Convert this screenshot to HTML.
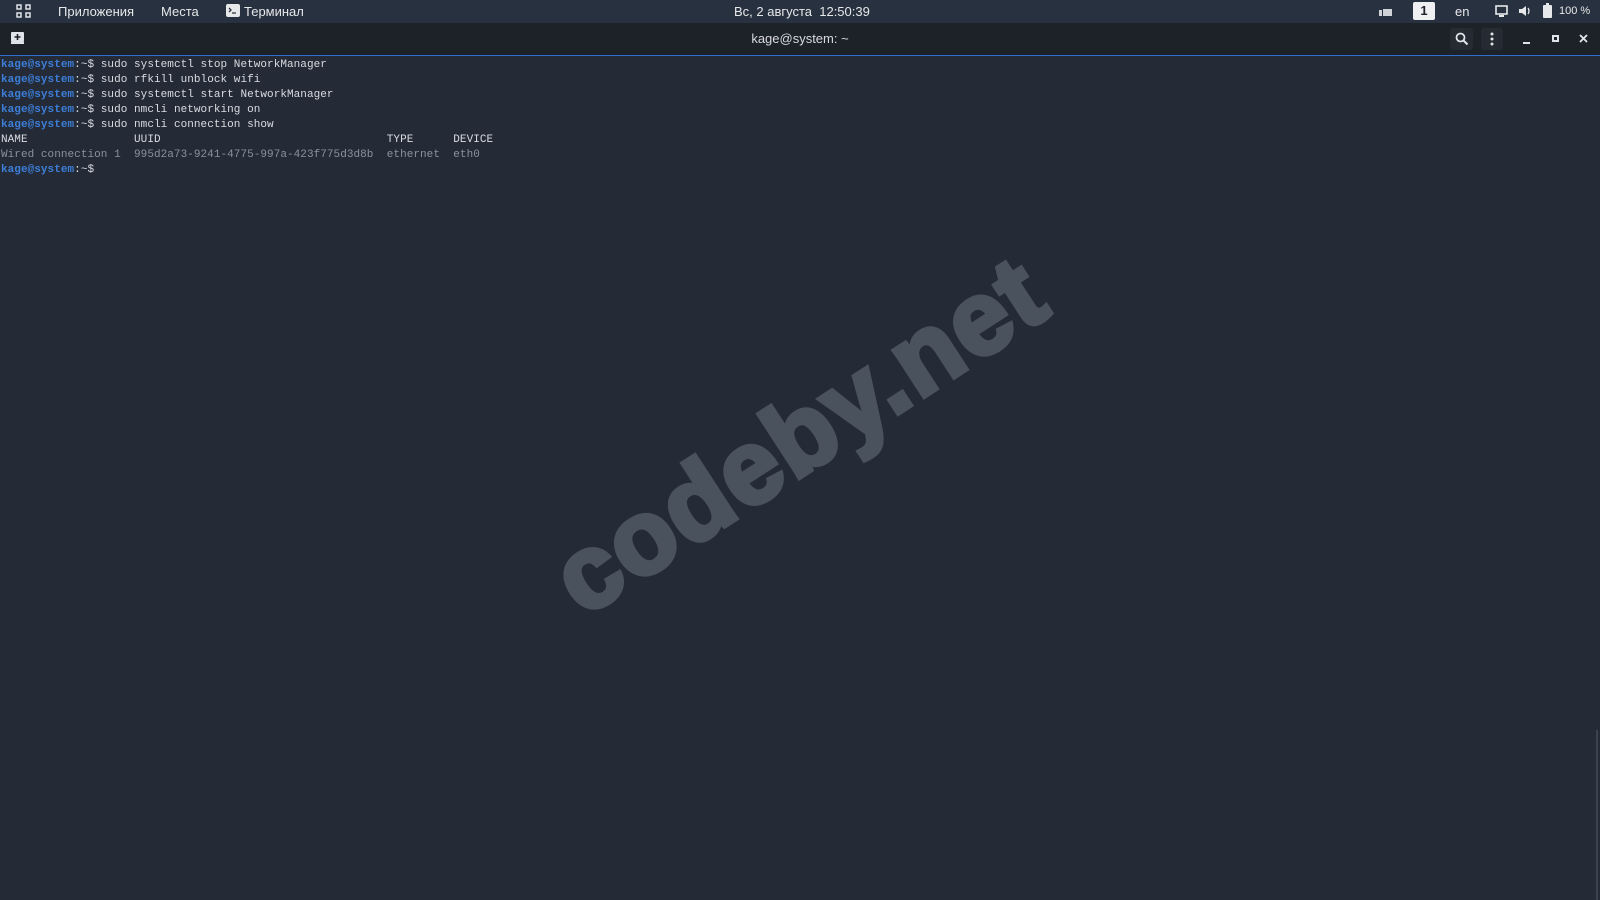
<!DOCTYPE html>
<html><head><meta charset="utf-8"><style>
*{margin:0;padding:0;box-sizing:border-box}
body{width:1600px;height:900px;overflow:hidden;background:#242b37;font-family:"Liberation Sans","Noto Sans CJK SC",sans-serif;position:relative}
.top{position:absolute;left:0;top:0;width:1600px;height:23px;background:#28313f;color:#e6e8ea;font-size:13px}
.top span{position:absolute;top:4px}
.title{position:absolute;left:0;top:23px;width:1600px;height:33px;background:#1d2128;border-bottom:1px solid #2f6fd0;color:#d8dadd;font-size:13px}
.term{position:absolute;left:1px;top:58px;font-family:"Liberation Mono",monospace;font-size:11px;letter-spacing:0.05px;line-height:15px;color:#d9dde2;white-space:pre}
.p{color:#3d7ed8;font-weight:bold}
.g{color:#8a929c}
.wm{position:absolute;left:800px;top:436px;transform:translate(-50%,-50%) rotate(-33deg);font-weight:bold;font-size:104px;color:#4a525d;-webkit-text-stroke:5px #4a525d;white-space:nowrap;letter-spacing:2px}
</style></head><body>
<div class="wm">codeby.net</div>
<div class="top">
<svg style="position:absolute;left:16px;top:4px" width="16" height="15"><g fill="none" stroke="#dfe2e6" stroke-width="1.5"><rect x="1" y="1" width="4" height="4"/><rect x="10" y="1" width="4" height="4"/><rect x="1" y="9" width="4" height="4"/><rect x="10" y="9" width="4" height="4"/></g></svg>
<span style="left:58px">Приложения</span>
<span style="left:161px">Места</span>
<svg style="position:absolute;left:226px;top:4px" width="14" height="13"><rect width="14" height="13" rx="2" fill="#e6e8ea"/><path d="M3 4l2 2-2 2M6 9h4" stroke="#28313f" stroke-width="1.3" fill="none"/></svg>
<span style="left:244px">Терминал</span>
<span style="left:734px">Вс, 2 августа&nbsp; 12:50:39</span>
<svg style="position:absolute;left:1379px;top:5px" width="14" height="12"><path d="M0 5h3v6H0zM4 4h9v7H4zM5 0a2 2 0 1 1 0.1 0M10 0a2 2 0 1 1 0.1 0" fill="#cfd3d8"/></svg>
<div style="position:absolute;left:1413px;top:2px;width:22px;height:18px;background:#eef0f2;border-radius:2px;color:#1d2128;font-weight:bold;font-size:13px;text-align:center;line-height:18px">1</div>
<span style="left:1455px">en</span>
<svg style="position:absolute;left:1495px;top:5px" width="13" height="12"><rect x="1" y="1" width="11" height="8" fill="none" stroke="#e6e8ea" stroke-width="1.6"/><rect x="4" y="10" width="5" height="2" fill="#e6e8ea"/></svg>
<svg style="position:absolute;left:1518px;top:4px" width="14" height="14"><path d="M1 5h3l4-3v10l-4-3H1z" fill="#e6e8ea"/><path d="M10 4q2 3 0 6" stroke="#e6e8ea" fill="none" stroke-width="1.3"/></svg>
<svg style="position:absolute;left:1543px;top:3px" width="9" height="15"><rect x="0" y="2" width="9" height="13" rx="1" fill="#e6e8ea"/><rect x="3" y="0" width="3" height="2" fill="#e6e8ea"/></svg>
<span style="left:1559px;font-size:11px;top:5px">100 %</span>
</div>
<div class="title">
<svg style="position:absolute;left:11px;top:9px" width="14" height="12"><rect x="0" y="0" width="13" height="10" rx="1" fill="#e0e3e7"/><rect x="0" y="10" width="13" height="2" fill="#e0e3e7"/><path d="M6.5 2v6M3.5 5h6" stroke="#1d2128" stroke-width="1.6"/></svg>
<div style="position:absolute;left:0;width:1600px;text-align:center;top:8px">kage@system: ~</div>
<div style="position:absolute;left:1450px;top:5px;width:23px;height:22px;background:#252a33;border-radius:3px"></div>
<svg style="position:absolute;left:1455px;top:9px" width="14" height="14"><circle cx="5.5" cy="5.5" r="4" fill="none" stroke="#e0e3e7" stroke-width="1.8"/><path d="M8.5 8.5l4 4" stroke="#e0e3e7" stroke-width="2"/></svg>
<div style="position:absolute;left:1481px;top:5px;width:22px;height:22px;background:#252a33;border-radius:3px"></div>
<svg style="position:absolute;left:1489px;top:9px" width="6" height="14"><circle cx="3" cy="2" r="1.5" fill="#e0e3e7"/><circle cx="3" cy="7" r="1.5" fill="#e0e3e7"/><circle cx="3" cy="12" r="1.5" fill="#e0e3e7"/></svg>
<div style="position:absolute;left:1523px;top:19px;width:7px;height:2px;background:#e0e3e7"></div>
<div style="position:absolute;left:1552px;top:12px;width:7px;height:7px;border:2px solid #e0e3e7"></div>
<svg style="position:absolute;left:1579px;top:11px" width="9" height="9"><path d="M1 1l7 7M8 1l-7 7" stroke="#e0e3e7" stroke-width="1.8"/></svg>
</div>
<div class="term"><span class="p">kage@system</span>:~$ sudo systemctl stop NetworkManager
<span class="p">kage@system</span>:~$ sudo rfkill unblock wifi
<span class="p">kage@system</span>:~$ sudo systemctl start NetworkManager
<span class="p">kage@system</span>:~$ sudo nmcli networking on
<span class="p">kage@system</span>:~$ sudo nmcli connection show
NAME                UUID                                  TYPE      DEVICE 
<span class="g">Wired connection 1  995d2a73-9241-4775-997a-423f775d3d8b  ethernet  eth0   </span>
<span class="p">kage@system</span>:~$ </div>
<div style="position:absolute;left:1596px;top:730px;width:2px;height:170px;background:#3a4350"></div>
</body></html>
